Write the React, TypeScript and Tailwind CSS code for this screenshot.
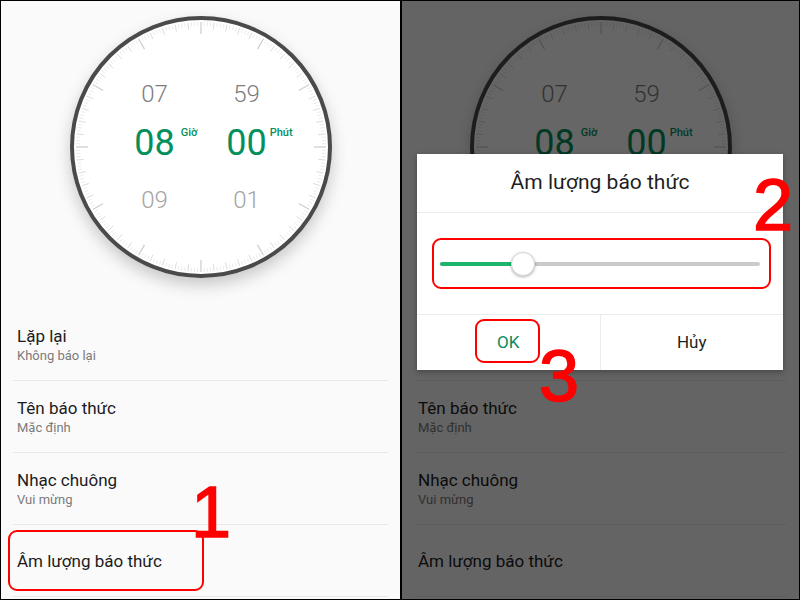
const items = [
  { title: "Lặp lại", sub: "Không báo lại" },
  { title: "Tên báo thức", sub: "Mặc định" },
  { title: "Nhạc chuông", sub: "Vui mừng" },
  { title: "Âm lượng báo thức", sub: "" },
];

function ClockTicks() {
  const c = 131;
  const ticks = Array.from({ length: 240 }, (_, i) => {
    const major = i % 20 === 0;
    const medium = i % 4 === 0;
    const len = major ? 12 : medium ? 7 : 4;
    const color = major ? "#cfcfcf" : medium ? "#dcdcdc" : "#ebebeb";
    const a = (i * 1.5 * Math.PI) / 180;
    const r1 = 125;
    const r2 = r1 - len;
    return (
      <line
        key={i}
        x1={c + r1 * Math.sin(a)}
        y1={c - r1 * Math.cos(a)}
        x2={c + r2 * Math.sin(a)}
        y2={c - r2 * Math.cos(a)}
        stroke={color}
        strokeWidth={major ? 1.3 : 1}
      />
    );
  });
  return (
    <svg className="absolute inset-0" width="262" height="262" viewBox="0 0 262 262">
      <circle cx="131" cy="131" r="129" fill="#ffffff" stroke="#4a4a4a" strokeWidth="4" />
      {ticks}
    </svg>
  );
}

function Clock() {
  return (
    <div className="h-[308px] pt-[15px]">
      <div className="relative mx-auto w-[262px] h-[262px] rounded-full shadow-[0_7px_16px_rgba(0,0,0,0.2)]">
        <ClockTicks />
        <div className="relative grid grid-cols-[80px_80px] gap-x-[12px] justify-center pt-[64px] text-center">
          <div className="text-[24px] leading-[28px] font-light text-[#7c7c7c]">07</div>
          <div className="text-[24px] leading-[28px] font-light text-[#7c7c7c]">59</div>
          <div className="mt-[14px] flex justify-center">
            <span className="relative text-[36px] leading-[42px] text-[#03905c]">
              08
              <span className="absolute left-full top-[5px] ml-[6px] text-[11px] leading-[11px] font-medium">Giờ</span>
            </span>
          </div>
          <div className="mt-[14px] flex justify-center">
            <span className="relative text-[36px] leading-[42px] text-[#03905c]">
              00
              <span className="absolute left-full top-[5px] ml-[3px] text-[11px] leading-[11px] font-medium">Phút</span>
            </span>
          </div>
          <div className="mt-[22px] text-[24px] leading-[28px] font-light text-[#a4a4a4]">09</div>
          <div className="mt-[22px] text-[24px] leading-[28px] font-light text-[#a4a4a4]">01</div>
        </div>
      </div>
    </div>
  );
}

function Screen() {
  return (
    <>
      <Clock />
      <div>
        {items.map((it) => (
          <div key={it.title} className="mx-3 h-[72px] px-1 flex flex-col justify-center border-b border-[#e8e8e8]">
            <div className="text-[17px] leading-[20px] text-[#1c1c1c]">{it.title}</div>
            {it.sub && <div className="mt-[2px] text-[13px] leading-[16px] text-[#7a7a7a]">{it.sub}</div>}
          </div>
        ))}
      </div>
    </>
  );
}

function Mark({ n, className }: { n: string; className: string }) {
  return (
    <div className={`absolute text-[72px] leading-none text-[#ff0000] [-webkit-text-stroke:1.5px_#ff0000] font-['Liberation_Sans',Arial,sans-serif] ${className}`}>
      {n}
    </div>
  );
}

export default function App() {
  return (
    <div className="w-[800px] h-[600px] bg-black p-px flex gap-[2px] font-['Roboto','Noto_Sans',sans-serif] overflow-hidden">
      <div className="relative w-[399px] h-full bg-[#fafafa] overflow-hidden">
        <Screen />
        <div className="absolute left-[7px] top-[529px] w-[196px] h-[61px] rounded-[9px] border-2 border-[#ff0000]" />
        <Mark n="1" className="left-[190px] top-[475px]" />
      </div>

      <div className="relative flex-1 h-full bg-[#fafafa] overflow-hidden">
        <Screen />
        <div className="absolute inset-0 bg-black/60" />

        <div className="absolute left-[15px] top-[153px] w-[366px] h-[216px] bg-white shadow-[0_2px_6px_rgba(0,0,0,0.3)] flex flex-col">
          <div className="h-[59px] flex items-center justify-center border-b border-[#ececec] text-[21px] text-[#1f1f1f]">
            Âm lượng báo thức
          </div>
          <div className="h-[101px] px-[23px] flex items-center">
            <div className="relative flex-1 h-[4px] rounded-full bg-[#cacaca]">
              <div className="h-full w-[26%] rounded-full bg-[#1cb56b]" />
              <div className="absolute left-[26%] top-1/2 -translate-x-1/2 -translate-y-1/2 w-[24px] h-[24px] rounded-full bg-white border border-[#d6d6d6] shadow-[0_1px_3px_rgba(0,0,0,0.3)]" />
            </div>
          </div>
          <div className="flex-1 flex border-t border-[#ececec] text-[17px]">
            <div className="flex-1 flex items-center justify-center text-[#0a8a5a] border-r border-[#ececec]">OK</div>
            <div className="flex-1 flex items-center justify-center text-[#1f1f1f]">Hủy</div>
          </div>
        </div>

        <div className="absolute left-[30px] top-[237px] w-[339px] h-[51px] rounded-[9px] border-2 border-[#ff0000]" />
        <div className="absolute left-[73px] top-[318px] w-[65px] h-[44px] rounded-[9px] border-2 border-[#ff0000]" />
        <Mark n="2" className="left-[351px] top-[168px]" />
        <Mark n="3" className="left-[137px] top-[339px]" />
      </div>
    </div>
  );
}
